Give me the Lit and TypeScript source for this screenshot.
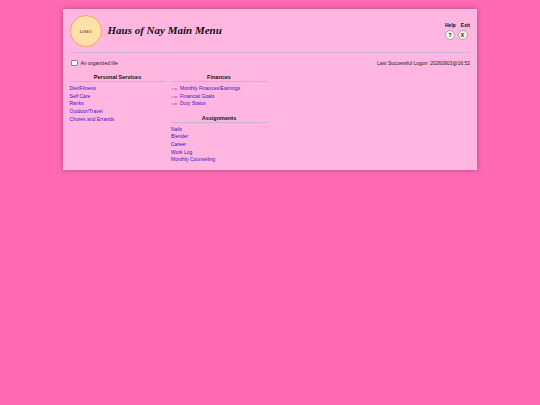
import { LitElement, html, css } from "lit";
import { customElement } from "lit/decorators.js";

@customElement("app-root")
export class AppRoot extends LitElement {
  static styles = css`
    :host { display: block; min-height: 405px; background: #ff69b4; font-family: "Liberation Sans", Arial, sans-serif; padding-top: 9px; box-sizing: border-box; }
    .card { width: 414px; height: 161px; margin-left: 63px; background: #ffb6e1; box-shadow: 0 0 5px rgba(0,0,0,.3); box-sizing: border-box; padding: 6px 7px 0 6.5px; }
    .header { display: flex; align-items: flex-start; height: 37px; border-bottom: 1px solid #d4b6dc; box-sizing: content-box; }
    .logo { width: 30px; height: 30px; border-radius: 50%; background: #ffe0a8; border: 1px solid #f0a860; display: flex; align-items: center; justify-content: center; font-size: 4px; color: #000; flex: none; }
    h1 { margin: 7px 0 0 6px; font: italic bold 11px/16px "Liberation Serif", serif; color: #111; flex: 1; }
    .actions { display: flex; flex-direction: column; align-items: flex-end; gap: 1.5px; margin-top: 7px; }
    .labels { display: flex; gap: 5px; font-size: 5px; line-height: 6px; font-weight: bold; color: #111; }
    .btns { display: flex; gap: 2.5px; margin-right: 2.5px; }
    .btn { width: 8px; height: 8px; border-radius: 50%; background: #eef0e8; border: 1px solid #aaa; display: flex; align-items: center; justify-content: center; font-size: 5px; font-weight: bold; color: #111; flex: none; }
    .sub { display: flex; justify-content: space-between; align-items: center; font-size: 5px; color: #222; margin-top: 7px; height: 6px; }
    .check { display: flex; align-items: center; gap: 3px; margin-left: 1.5px; }
    .box { width: 4.5px; height: 4.5px; background: #fff; border: 1px solid #888; border-radius: 1px; }
    .cols { display: grid; grid-template-columns: 96px 96px; gap: 5.5px; margin-top: 8px; }
    h2 { margin: 0; font-size: 5.5px; font-weight: bold; text-align: center; color: #111; border-bottom: 1px solid #d0b0d0; padding-bottom: 1px; line-height: 6px; }
    h2.second { margin-top: 6.5px; }
    ul { list-style: none; margin: 3px 0 0; padding: 0; }
    li { font-size: 5px; line-height: 7.7px; color: #3c14c0; display: flex; align-items: center; }
    .arrow { width: 6px; height: 4px; margin-right: 3px; flex: none; }
    .arrow path { fill: #f03868; stroke: #f03868; stroke-width: .5; }
  `;
  render() {
    const arrow = html`<svg class="arrow" viewBox="0 0 6 4"><path d="M0 2H4.6M4.6 1.4L5.8 2L4.6 2.6Z"></path></svg>`;
    return html`<div class="card">
      <div class="header">
        <div class="logo">LOGO</div>
        <h1>Haus of Nay Main Menu</h1>
        <div class="actions">
          <div class="labels"><span>Help</span><span>Exit</span></div>
          <div class="btns"><span class="btn">?</span><span class="btn">X</span></div>
        </div>
      </div>
      <div class="sub">
        <span class="check"><span class="box"></span>An organized life</span>
        <span>Last Successful Logon: 20260903@16:52</span>
      </div>
      <div class="cols">
        <div>
          <h2>Personal Services</h2>
          <ul>
            ${["Diet/Fitness","Self Care","Ranks","Outdoor/Travel","Chores and Errands"].map(t=>html`<li>${t}</li>`)}
          </ul>
        </div>
        <div>
          <h2>Finances</h2>
          <ul>
            ${["Monthly Finances/Earnings","Financial Goals","Duty Status"].map(t=>html`<li>${arrow}${t}</li>`)}
          </ul>
          <h2 class="second">Assignments</h2>
          <ul>
            ${["Nails","Blender","Career","Work Log","Monthly Counseling"].map(t=>html`<li>${t}</li>`)}
          </ul>
        </div>
      </div>
    </div>`;
  }
}
